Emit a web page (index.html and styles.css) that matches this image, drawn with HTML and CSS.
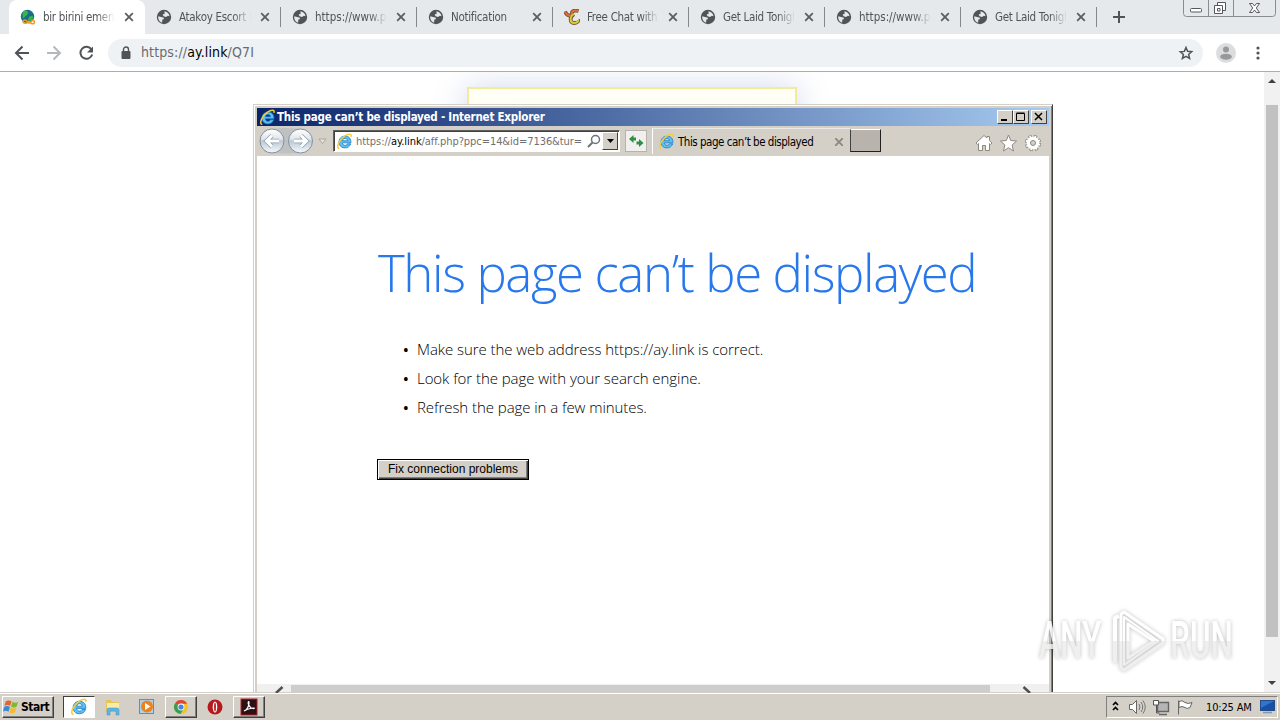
FILE: index.html
```
<!doctype html>
<html lang="en">
    <head>
        <meta charset="UTF-8" />
        <title>This page can’t be displayed</title>
        <link rel="stylesheet" href="styles.css">
    </head>
    <body>
        <svg class="defs" width="0" height="0">
            <symbol id="globe" viewBox="0 0 16 16">
                <circle cx="8" cy="8" r="7.2" fill="#505458" />
                <path d="M2.200 7.300L5 8c2 0 3 .8 3 2.200H6.500l-.5 3.600C3.600 13 1.900 10.500 2.200 7.300zM8 2.600c2.800 0 5.200 1.800 5.600 4.700l-1.600-.5-2 1.200-2.500-.8-.8-1.700L9 4.600z" fill="#e6e9ec" />
            </symbol>
            <symbol id="close" viewBox="0 0 10 10">
                <path d="M1.200 1.200L8.800 8.800M8.800 1.200L1.200 8.800" stroke="#5a5e62" stroke-width="1.800" fill="none" />
            </symbol>
            <symbol id="ie" viewBox="0 0 18 18">
                <path d="M15.600 11.500c-1 2.800-3.300 4.300-6.200 4.300-3.700 0-6.300-2.600-6.300-6.100 0-3.700 2.800-6.400 6.500-6.400 4.200 0 6.500 2.900 6.200 7.100H6.700c.2 1.700 1.300 2.700 2.900 2.700 1.100 0 1.900-.6 2.400-1.600zM6.800 8.200h5.400c-.1-1.600-1.100-2.500-2.700-2.500-1.500 0-2.500.9-2.700 2.500z" fill="#5cc0f2" stroke="#1c78c0" stroke-width=".8" />
                <path d="M3.500 16.500C-.8 16 3.500 7 9 3.300c4-2.700 8-3 6.800.8" fill="none" stroke="#f5cc3a" stroke-width="1.600" />
            </symbol>
        </svg>

        <div class="tab-strip">
            <div class="tab active">
                <svg class="favicon" viewBox="0 0 16 16">
                    <circle cx="7.500" cy="7.500" r="6.700" fill="#176f8c" />
                    <path d="M3 3c3-3 5-1 5 1S5 7 4 9 2 6 3 3zM9 8c2-2 5-1 4 1s-4 4-5 2z" fill="#39b54a" />
                    <path d="M3 12.500c1-2 3-2 4 0s3 2 4 0 4-1 3.500 1-3 1.500-4 0-3-1-3.500 0-4 1.500-4-1z" fill="none" stroke="#f39a1f" stroke-width="1.500" />
                </svg>
                <span class="tab-title">bir birini emen l</span>
                <svg class="tab-close"><use href="#close" /></svg>
            </div>
            <div class="tab">
                <svg class="favicon"><use href="#globe" /></svg>
                <span class="tab-title">Atakoy Escort B</span>
                <svg class="tab-close"><use href="#close" /></svg>
            </div>
            <div class="tab">
                <svg class="favicon"><use href="#globe" /></svg>
                <span class="tab-title url">https://www.p</span>
                <svg class="tab-close"><use href="#close" /></svg>
            </div>
            <div class="tab">
                <svg class="favicon"><use href="#globe" /></svg>
                <span class="tab-title">Notification</span>
                <svg class="tab-close"><use href="#close" /></svg>
            </div>
            <div class="tab">
                <svg class="favicon" viewBox="0 0 16 16">
                    <path d="M1 2.500c2 5 5 4 8 3.500M8.500 5c-2-3 2-4 6-3M10 5c-5 3-4 9 0 9 3 0 5-2 4-3" fill="none" stroke="#75522f" stroke-width="3.800" />
                    <path d="M1 2.500c2 5 5 4 8 3.500M8.500 5c-2-3 2-4 6-3" fill="none" stroke="#dd7140" stroke-width="2" />
                    <path d="M10 5c-5 3-4 9 0 9 3 0 5-2 4-3" fill="none" stroke="#d3cf3a" stroke-width="2" />
                </svg>
                <span class="tab-title">Free Chat with</span>
                <svg class="tab-close"><use href="#close" /></svg>
            </div>
            <div class="tab">
                <svg class="favicon"><use href="#globe" /></svg>
                <span class="tab-title">Get Laid Tonigh</span>
                <svg class="tab-close"><use href="#close" /></svg>
            </div>
            <div class="tab">
                <svg class="favicon"><use href="#globe" /></svg>
                <span class="tab-title url">https://www.p</span>
                <svg class="tab-close"><use href="#close" /></svg>
            </div>
            <div class="tab">
                <svg class="favicon"><use href="#globe" /></svg>
                <span class="tab-title">Get Laid Tonigh</span>
                <svg class="tab-close"><use href="#close" /></svg>
            </div>
            <svg class="new-tab" viewBox="0 0 12 12"><path d="M6 0v12M0 6h12" stroke="#505458" stroke-width="2" /></svg>
            <svg class="caption-buttons" viewBox="0 0 94 17">
                <path d="M.5 0v13.500q0 3 3 3h86q3 0 3-3V0M25.500 0v16M50.500 0v16" fill="none" stroke="#898d91" />
                <g fill="#fff" stroke="#54585c">
                    <rect x="7.500" y="8.500" width="11" height="3.500" rx="1" />
                    <path d="M34.500 2.500h8v8h-8z" />
                    <path d="M31.500 5.500h8v8h-8z" />
                    <path d="M34.500 8.500h2.500v2.500h-2.500z" />
                    <path d="M66.500 3.500h3l2 2.500 2-2.500h3l-3.200 4.500 3.200 4.500h-3l-2-2.500-2 2.500h-3l3.200-4.500z" />
                </g>
            </svg>
        </div>

        <div class="toolbar">
            <svg class="nav" viewBox="0 0 90 20" fill="none" stroke-width="2">
                <path d="M15 10H2M8.500 3.500L2 10l6.500 6.500" stroke="#505458" />
                <path d="M33 10h13M39.500 3.500L46 10l-6.500 6.500" stroke="#b6b9bc" />
                <path d="M77.500 6.500a6 6 0 1 0 .7 5" stroke="#505458" />
                <path d="M79 3.500v6h-6z" fill="#505458" />
            </svg>
            <div class="omnibox">
                <svg class="lock" viewBox="0 0 10 14"><rect x=".5" y="5" width="9" height="8" rx="1" fill="#505458" /><path d="M2.500 5.500V3.500a2.500 2.500 0 0 1 5 0v2" fill="none" stroke="#505458" stroke-width="1.400" /></svg>
                <span class="address">https://<b>ay.link</b>/Q7I</span>
                <svg class="star" viewBox="0 0 16 16"><path d="M8 2.500l1.600 3.800 4.100.4-3.100 2.700 1 4L8 11.300l-3.600 2.200 1-4-3.100-2.700 4.100-.4z" fill="none" stroke="#505458" stroke-width="1.500" /></svg>
            </div>
            <svg class="avatar" viewBox="0 0 20 20"><circle cx="10" cy="10" r="10" fill="#dcddde" /><circle cx="10" cy="6.500" r="3" fill="#999" /><ellipse cx="10" cy="13.700" rx="5.800" ry="3" fill="#999" /></svg>
            <svg class="menu" viewBox="0 0 4 14" fill="#505458"><circle cx="2" cy="2" r="1.600" /><circle cx="2" cy="7" r="1.600" /><circle cx="2" cy="12" r="1.600" /></svg>
        </div>

        <div class="viewport">
            <div class="page"><div class="page-box"></div></div>
            <div class="scrollbar">
                <svg viewBox="0 0 8 4"><path d="M4 0L8 4H0z" fill="#404040" /></svg>
                <div class="thumb"></div>
                <svg viewBox="0 0 8 4"><path d="M4 4L8 0H0z" fill="#404040" /></svg>
            </div>
        </div>

        <div class="ie-window">
            <div class="ie-titlebar">
                <svg class="ie-logo"><use href="#ie" /></svg>
                <span class="ie-title">This page can’t be displayed - Internet Explorer</span>
                <span class="win-button"><svg viewBox="0 0 10 10"><path d="M1 8h6" stroke="#000" stroke-width="2" /></svg></span>
                <span class="win-button"><svg viewBox="0 0 10 10"><path d="M.5 1.500h8v7h-8zM.5 1h8" fill="none" stroke="#000" /></svg></span>
                <span class="win-button last"><svg viewBox="0 0 10 10"><path d="M1 1l7 7M8 1L1 8" stroke="#000" stroke-width="1.500" /></svg></span>
            </div>
            <div class="ie-toolbar">
                <svg class="ie-nav" viewBox="0 0 74 30">
                    <defs>
                        <linearGradient id="orb" x2="0" y2="1"><stop offset="0" stop-color="#fff" /><stop offset=".42" stop-color="#e2e6ea" /><stop offset=".5" stop-color="#bcc8d4" /><stop offset="1" stop-color="#f6fafd" /></linearGradient>
                    </defs>
                    <path d="M7 4Q29 0 50 4v22Q29 29 7 26z" fill="#bfc0c1" />
                    <g fill="url(#orb)" stroke="#84909d">
                        <circle cx="15" cy="15" r="12" />
                        <circle cx="43.500" cy="15" r="12" />
                    </g>
                    <g fill="none" stroke="#8d9dae" stroke-width="4.500"><path d="M22 15H10M15 9.500L9.500 15l5.500 5.500M37 15h12M44 9.500l5.500 5.500-5.500 5.500" /></g>
                    <g fill="none" stroke="#fff" stroke-width="3"><path d="M22 15H10M15 9.500L9.500 15l5.500 5.500M37 15h12M44 9.500l5.500 5.500-5.500 5.500" /></g>
                    <path d="M62 13h7l-3.500 4.500z" fill="#e8e6e2" stroke="#aaa69f" />
                </svg>
                <div class="ie-address">
                    <svg class="ie-logo"><use href="#ie" /></svg>
                    <span class="ie-url">https://<b>ay.link</b>/aff.php?ppc=14&amp;id=7136&amp;tur=</span>
                    <svg class="ie-search" viewBox="0 0 14 14"><circle cx="8.500" cy="5.500" r="4" fill="none" stroke="#6e7276" stroke-width="1.500" /><path d="M5.500 8.500L1 13" stroke="#6e7276" stroke-width="2" /></svg>
                    <span class="ie-drop"><svg viewBox="0 0 7 4"><path d="M0 0h7L3.500 4z" /></svg></span>
                </div>
                <div class="ie-refresh">
                    <svg viewBox="0 0 16 16"><path d="M8 7.500H5.500V10L1 6l4.500-4v2.500H8zM8.500 8.500H11V6l4.500 4L11 14v-2.500H8.500z" fill="#2c9142" /></svg>
                </div>
                <div class="ie-tab">
                    <svg class="ie-logo"><use href="#ie" /></svg>
                    <span class="ie-tab-title">This page can’t be displayed</span>
                    <svg class="ie-tab-close" viewBox="0 0 8 8"><path d="M0 0l8 8M8 0L0 8" stroke="#8b8781" stroke-width="1.800" /></svg>
                </div>
                <div class="ie-new-tab"></div>
                <svg class="ie-tools" viewBox="0 0 68 18" fill="#fff" stroke="#8d8982">
                    <path d="M1 9l8-7.500L12 4V2.500h2.500v4L17 9l-1.500 1.500-1-1v7h-4v-5H7.500v5h-4v-7l-1 1z" />
                    <path d="M33.500 1l2.200 5.500 5.800.5-4.400 4 1.400 6-5-3.300-5 3.300 1.400-6-4.400-4 5.800-.5z" />
                    <circle cx="58" cy="9" r="6.200" stroke-width="4" stroke-dasharray="2.900 1.970" />
                    <circle cx="58" cy="9" r="6.200" stroke="#fff" stroke-width="2.500" stroke-dasharray="1.700 3.170" stroke-dashoffset="-.6" />
                    <circle cx="58" cy="9" r="5" stroke="none" />
                    <circle cx="58" cy="9" r="2.500" fill="#d4d0c8" />
                </svg>
            </div>
            <div class="ie-content">
                <h1>This page can’t be displayed</h1>
                <ul>
                    <li>Make sure the web address https://ay.link is correct.</li>
                    <li>Look for the page with your search engine.</li>
                    <li>Refresh the page in a few minutes.</li>
                </ul>
                <button>Fix connection problems</button>
            </div>
            <div class="ie-hscroll">
                <svg viewBox="0 0 12 7"><path d="M9.500 1L3 7" stroke="#505050" stroke-width="2.500" /></svg>
                <div class="ie-hthumb"></div>
                <svg viewBox="0 0 12 7"><path d="M2.500 1L9 7" stroke="#505050" stroke-width="2.500" /></svg>
            </div>
        </div>

        <div class="watermark">
            <span class="any">ANY</span>
            <svg viewBox="0 0 58 66" fill="none" stroke-linejoin="round">
                <defs>
                    <linearGradient id="mark-fill" gradientUnits="userSpaceOnUse" x1="0" y1="0" x2="0" y2="66"><stop offset=".5" stop-color="#fff" /><stop offset=".5" stop-color="#ededed" /></linearGradient>
                </defs>
                <g stroke="url(#mark-fill)">
                    <path d="M7 55V10l4-2" stroke-width="4" />
                    <path d="M16 4l39 27v4L16 62l-3-2V6zM20 16v34l26-17z" stroke-width="3" />
                    <path d="M16 9l34 24L16 57z" stroke-width="2" />
                </g>
            </svg>
            <span class="run">RUN</span>
        </div>

        <div class="taskbar">
            <div class="start">
                <svg viewBox="0 0 18 16">
                    <path d="M3 2q3-2 6 0L7.500 7q-3-2-6 0z" fill="#e8632b" />
                    <path d="M10 2.500q3 2 6 0L14.500 7.500q-3 2-6 0z" fill="#7fb832" />
                    <path d="M1.300 8q3-2 6 0L5.800 13q-3-2-6 0z" fill="#3a86d8" />
                    <path d="M8.200 8.500q3 2 6 0L12.700 13.500q-3 2-6 0z" fill="#f4bd27" />
                </svg>
                <span>Start</span>
            </div>
            <div class="task pressed"><svg><use href="#ie" /></svg></div>
            <div class="task flat">
                <svg viewBox="0 0 18 18"><path d="M2 2h5l1 2h7v10H2z" fill="#e3c55a" /><path d="M3 5h12v8H3z" fill="#f9eca9" /><path d="M3 17v-5q0-2 2-2h8q2 0 2 2v5h-3v-4H6v4z" fill="#62b5df" stroke="#3d8fbd" stroke-width=".5" /></svg>
            </div>
            <div class="task flat">
                <svg viewBox="0 0 18 18"><rect x="1.500" y="1.500" width="14" height="14" fill="#a7d3f2" stroke="#4e93c9" /><circle cx="9" cy="8.500" r="6" fill="#f08118" /><path d="M7 5l5.500 3.500L7 12z" fill="#fff" /></svg>
            </div>
            <div class="task">
                <svg viewBox="0 0 18 18"><circle cx="9" cy="9" r="7" fill="#f3c32c" /><path d="M9 9L3 5.300A7 7 0 0 1 15.200 5.700H9z" fill="#df4637" /><path d="M9 9L3 5.300A7 7 0 0 0 8.500 16l3.200-5.500z" fill="#35a052" /><circle cx="9" cy="9" r="3.400" fill="#fff" /><circle cx="9" cy="9" r="2.600" fill="#4484e8" /></svg>
            </div>
            <div class="task flat">
                <svg viewBox="0 0 18 18"><circle cx="9" cy="9" r="7.500" fill="#b5191d" /><ellipse cx="9" cy="9" rx="2.300" ry="5.500" fill="#fff" /><ellipse cx="9" cy="9" rx="1" ry="4.500" fill="#c72b2c" /></svg>
            </div>
            <div class="task">
                <svg viewBox="0 0 18 18"><rect x="1" y="1" width="16" height="16" fill="#2b1114" stroke="#b32025" /><path d="M4 13c3-1 5-5 5-8s-1.500-1-.5 1.500S12 11 14 10.500 9 9.500 4 13z" fill="none" stroke="#fff" stroke-width="1.200" /></svg>
            </div>
            <div class="tray">
                <svg class="tray-icons" viewBox="0 0 90 20" fill="none">
                    <path d="M6 8l2.500-2.500L11 8M6 13l2.500-2.500L11 13" stroke="#000" stroke-width="1.700" />
                    <path d="M22.500 7.500h3l4-4v13l-4-4h-3z" fill="#fff" stroke="#666" />
                    <path d="M32 7q2 3 0 6M34 5q3.500 5 0 10M36 3.500q4.500 6.500 0 13" stroke="#777" />
                    <path d="M50.500 5.500h11v9h-11zM52 17.500h8" fill="#b4b6b5" stroke="#666" stroke-width="1.400" />
                    <path d="M49.500 8v8h3" stroke="#555" />
                    <path d="M46.500 3.500h5v4.500h-5z" fill="#fff" stroke="#555" />
                    <path d="M71.500 3.500v14" stroke="#666" />
                    <path d="M72 4.500q3-2 6 1 3 2 7 0l-2 5q-3 2-5 0-3-2-6 0z" fill="#fff" stroke="#666" />
                </svg>
                <span class="clock">10:25 AM</span>
                <svg class="desktop" viewBox="0 0 16 14"><rect x=".5" y=".5" width="14" height="10" fill="#2f75d0" stroke="#254e88" /><path d="M1 8L14 1v9H1z" fill="#1750a6" /><path d="M3 12.500h9" stroke="#7c97b7" stroke-width="1.500" /></svg>
            </div>
        </div>
    </body>
</html>
```
FILE: styles.css
```
* {
    box-sizing: border-box;
}

body {
    margin: 0;
    width: 1280px;
    height: 720px;
    display: flex;
    flex-direction: column;
    position: relative;
    overflow: hidden;
    background: #fff;
    font-family: "DejaVu Sans Condensed", "DejaVu Sans", sans-serif;
    font-size: 11px;
    color: #000;
}

svg {
    display: block;
    flex: none;
}

.defs {
    position: absolute;
}

/* Chrome tabs */
.tab-strip {
    height: 34px;
    flex: none;
    display: flex;
    align-items: center;
    padding-left: 9px;
    background: #e6e9ec;
}

.tab {
    width: 136px;
    height: 34px;
    flex: none;
    display: flex;
    align-items: center;
    padding-left: 11px;
    color: #505458;
    background: linear-gradient(#85898c, #85898c) 100% 50% / 1px 20px no-repeat;
}

.tab.active {
    background: #fff;
    border-radius: 8px 8px 0 0;
}

.favicon {
    width: 16px;
    height: 16px;
}

.tab-title {
    width: 72px;
    margin: 0 9px 0 7px;
    white-space: nowrap;
    font-size: 11.500px;
    letter-spacing: -0.3px;
    -webkit-mask-image: linear-gradient(90deg, #000 54px, transparent 72px);
    mask-image: linear-gradient(90deg, #000 54px, transparent 72px);
}

.tab-title.url {
    letter-spacing: 0;
}

.tab-close {
    width: 10px;
    height: 10px;
}

.new-tab {
    width: 12px;
    height: 12px;
    margin-left: 16px;
}

.caption-buttons {
    width: 94px;
    height: 17px;
    margin-left: auto;
    margin-right: 3px;
    align-self: flex-start;
}

/* Chrome toolbar */
.toolbar {
    height: 38px;
    flex: none;
    display: flex;
    align-items: center;
    padding-left: 14px;
    border-bottom: 1px solid #adadad;
}

.nav {
    width: 90px;
    height: 20px;
}

.omnibox {
    width: 1095px;
    height: 28px;
    margin-left: 4px;
    display: flex;
    align-items: center;
    padding: 0 9px 0 13px;
    border-radius: 14px;
    background: #eff2f5;
}

.lock {
    width: 10px;
    height: 14px;
}

.address {
    margin: -2px 0 0 10px;
    font-size: 14px;
    letter-spacing: 0.13px;
    color: #686c70;
}

.address b {
    font-weight: normal;
    color: #000;
}

.star {
    width: 16px;
    height: 16px;
    margin-left: auto;
}

.avatar {
    width: 20px;
    height: 20px;
    margin-left: 13px;
}

.menu {
    width: 4px;
    height: 14px;
    margin-left: 20px;
}

/* Page behind the popup */
.viewport {
    height: 620px;
    flex: none;
    display: flex;
}

.page {
    width: 1264px;
    overflow: hidden;
    padding: 15px 0 0 467px;
}

.page-box {
    width: 330px;
    height: 700px;
    border: 2px solid #f3ea9c;
    background: #fffff5;
    box-shadow: 0 0 30px rgba(100, 130, 190, 0.3);
}

.scrollbar {
    width: 16px;
    display: flex;
    flex-direction: column;
    align-items: center;
    padding: 7px 2px 7px;
    background: #f1f1f1;
}

.scrollbar svg {
    width: 8px;
    height: 4px;
}

.thumb {
    width: 12px;
    height: 532px;
    margin: 22px 0 auto;
    background: #c1c1c1;
}

/* Internet Explorer window */
.ie-window {
    position: absolute;
    left: 253px;
    top: 104px;
    width: 800px;
    height: 588px;
    padding: 2px 0 0 2px;
    border: 1px solid #d4d0c8;
    border-right: 1px solid #404040;
    border-bottom: 0;
    background: #d4d0c8;
    box-shadow: inset 1px 1px #fff, inset -1px 0 #808080;
}

.ie-titlebar {
    width: 792px;
    height: 18px;
    margin: 1px 0 0 1px;
    display: flex;
    align-items: center;
    padding: 0 2px;
    background: linear-gradient(90deg, #0a246a, #a6caf0);
}

.ie-logo {
    width: 17px;
    height: 17px;
}

.ie-title {
    margin: 0 auto 0 1px;
    font-size: 11.500px;
    font-weight: bold;
    color: #fff;
    letter-spacing: -0.23px;
    white-space: nowrap;
}

.win-button {
    width: 16px;
    height: 14px;
    display: flex;
    align-items: center;
    justify-content: center;
    background: #d4d0c8;
    border: 1px solid;
    border-color: #fff #404040 #404040 #fff;
}

.win-button svg {
    width: 10px;
    height: 10px;
}

.win-button.last {
    margin-left: 2px;
}

.ie-toolbar {
    width: 793px;
    height: 30px;
    margin-left: 1px;
    display: flex;
    align-items: center;
}

.ie-nav {
    width: 74px;
    height: 30px;
}

.ie-address {
    width: 287px;
    height: 22px;
    margin-left: 2px;
    display: flex;
    align-items: center;
    padding-left: 2px;
    background: #fff;
    border: 1px solid;
    border-color: #606060 #fff #fff #606060;
    box-shadow: inset 1px 1px #404040;
}

.ie-url {
    width: 229px;
    margin: 1px 0 0 3px;
    font-size: 11px;
    letter-spacing: -0.06px;
    color: #707070;
    white-space: nowrap;
}

.ie-url b {
    font-weight: normal;
    color: #000;
}

.ie-search {
    width: 14px;
    height: 14px;
    margin-left: 2px;
}

.ie-drop {
    width: 16px;
    height: 18px;
    margin-left: 1px;
    display: flex;
    align-items: center;
    justify-content: center;
    background: #d4d0c8;
    border: 1px solid;
    border-color: #fff #404040 #404040 #fff;
}

.ie-drop svg {
    width: 7px;
    height: 4px;
}

.ie-refresh {
    width: 22px;
    height: 22px;
    margin-left: 5px;
    padding: 2px;
    background: #f1f0ee;
    border: 1px solid #b7b3ac;
}

.ie-refresh svg {
    width: 16px;
    height: 16px;
}

.ie-tab {
    width: 198px;
    height: 26px;
    margin-left: 5px;
    display: flex;
    align-items: center;
    padding-left: 5px;
    border-left: 1px solid #fff;
    border-top: 1px solid #eceae6;
}

.ie-tab-title {
    width: 152px;
    margin-left: 3px;
    font-size: 11.500px;
    letter-spacing: -0.48px;
    white-space: nowrap;
}

.ie-tab-close {
    width: 8px;
    height: 8px;
    margin-left: 5px;
}

.ie-new-tab {
    width: 31px;
    height: 23px;
    margin-top: -1px;
    background: #b8b3ac;
    border: 1px solid;
    border-color: #fff #202020 #202020 #404040;
}

.ie-tools {
    width: 68px;
    height: 18px;
    margin-left: 94px;
    margin-top: 3px;
}

.ie-content {
    width: 792px;
    height: 528px;
    margin-left: 1px;
    padding: 81px 0 0 121px;
    background: #fff;
    overflow: hidden;
}

.ie-content h1 {
    margin: 0;
    height: 70px;
    font: 300 51px/70px "Open Sans", "Noto Sans", sans-serif;
    letter-spacing: -1.4px;
    color: #2778ec;
    white-space: nowrap;
}

.ie-content ul {
    margin: 28px 0 0;
    padding: 0 0 0 39px;
    list-style: none;
    font: 300 15px/29px "Open Sans", "Noto Sans", sans-serif;
    letter-spacing: -0.06px;
    white-space: nowrap;
}

.ie-content li {
    height: 29px;
}

.ie-content li::before {
    content: "•";
    display: inline-block;
    width: 14px;
    margin-left: -14px;
    font-size: 15px;
    font-weight: 600;
    line-height: 1;
}

.ie-content button {
    display: block;
    width: 152px;
    height: 21px;
    margin: 37px 0 0 -1px;
    padding: 0;
    background: #d4d0c8;
    border: 1px solid #000;
    box-shadow: inset 1px 1px #fff, inset -1px -1px #404040, inset -2px -2px #808080;
    font: 12px/17px "Liberation Sans", Arial, sans-serif;
    color: #000;
}

.ie-hscroll {
    width: 792px;
    height: 8px;
    margin-left: 1px;
    display: flex;
    padding-left: 16px;
    background: #f0f0f0;
}

.ie-hscroll svg {
    width: 12px;
    height: 7px;
    margin-top: 2px;
}

.ie-hthumb {
    width: 699px;
    margin: 1px 31px 0 6px;
    background: #cdcdcd;
}

/* Watermark over everything */
.watermark {
    position: absolute;
    left: 1039px;
    top: 608px;
    display: flex;
    align-items: center;
    font: 500 51px/66px Roboto, sans-serif;
    opacity: 0.85;
    filter: drop-shadow(0 0 2px rgba(0, 0, 0, 0.3));
}

.watermark span {
    width: 66px;
    height: 66px;
    transform: scaleX(0.62);
    transform-origin: 0 0;
    white-space: nowrap;
    color: transparent;
    background: linear-gradient(#fff 50%, #ededed 50%);
    -webkit-background-clip: text;
    background-clip: text;
}

.watermark .any,
.watermark .run {
    width: 106px;
    margin-right: -40px;
}

.watermark svg {
    width: 58px;
    height: 66px;
    margin: 0 4px 0 3px;
}

/* Taskbar */
.taskbar {
    height: 28px;
    flex: none;
    display: flex;
    align-items: center;
    padding: 1px 2px 0;
    background: #d4d0c8;
    border-top: 1px solid #d4d0c8;
    box-shadow: inset 0 1px #fff;
}

.start,
.task {
    height: 22px;
    display: flex;
    align-items: center;
    border: 1px solid;
    border-color: #fff #404040 #404040 #fff;
    box-shadow: inset -1px -1px #808080;
}

.start {
    width: 52px;
    margin-right: 9px;
    font-size: 12px;
    font-weight: bold;
    letter-spacing: -0.5px;
}

.start svg {
    width: 17px;
    height: 16px;
}

.start span {
    margin-left: 1px;
}

.task {
    width: 32px;
    margin-right: 2px;
    justify-content: center;
}

.task svg {
    width: 18px;
    height: 18px;
}

.task.flat {
    border-color: transparent;
    box-shadow: none;
}

.task.pressed {
    background: #fff;
    border-color: #404040 #fff #fff #404040;
    box-shadow: none;
}

.tray {
    width: 172px;
    height: 22px;
    margin-left: auto;
    display: flex;
    align-items: center;
    border: 1px solid;
    border-color: #808080 #fff #fff #808080;
}

.tray-icons {
    width: 90px;
    height: 20px;
}

.clock {
    width: 52px;
    margin-left: 9px;
    font-size: 11px;
    letter-spacing: -0.15px;
    white-space: nowrap;
}

.desktop {
    width: 16px;
    height: 14px;
    margin-left: 2px;
}
```
